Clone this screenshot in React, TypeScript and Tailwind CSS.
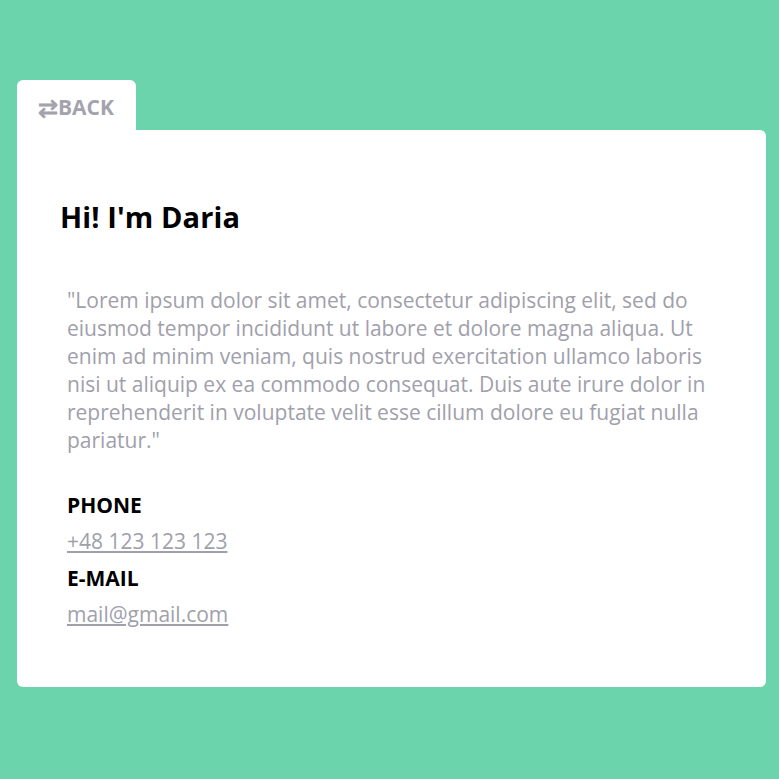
import React from 'react';

const quote =
  '"Lorem ipsum dolor sit amet, consectetur adipiscing elit, sed do eiusmod tempor incididunt ut labore et dolore magna aliqua. Ut enim ad minim veniam, quis nostrud exercitation ullamco laboris nisi ut aliquip ex ea commodo consequat. Duis aute irure dolor in reprehenderit in voluptate velit esse cillum dolore eu fugiat nulla pariatur."';

export default function App() {
  return (
    <div className="min-h-[779px] w-full bg-[#6bd4ad] pt-[80px] pl-[17px] font-['Open_Sans',sans-serif]">
      <div className="w-[749px]">
        <button className="flex h-[50px] w-[119px] items-center rounded-t-md bg-white pt-[6px] pl-[21px] text-[21px] font-bold text-[#a3a3ad]">
          <span className="text-[24px] leading-none">⇄</span>
          <span>BACK</span>
        </button>
        <div className="rounded-b-md rounded-tr-md bg-white pt-[67px] pb-[59px]">
          <h1 className="pl-[43px] text-[29px] font-bold leading-[40px] tracking-[0.1px] text-black">Hi! I'm Daria</h1>
          <p className="mt-[49px] w-[700px] pl-[50px] text-[21px] leading-[28px] text-[#a0a0ab]">{quote}</p>
          <div className="mt-[37px] flex flex-col pl-[50px] text-[21px] leading-[28px]">
            <span className="font-bold text-black">PHONE</span>
            <a href="#" className="mt-[8px] w-fit text-[#a0a0ab] underline">+48 123 123 123</a>
            <span className="mt-[9px] font-bold text-black">E-MAIL</span>
            <a href="#" className="mt-[8px] w-fit text-[#a0a0ab] underline">mail@gmail.com</a>
          </div>
        </div>
      </div>
    </div>
  );
}
